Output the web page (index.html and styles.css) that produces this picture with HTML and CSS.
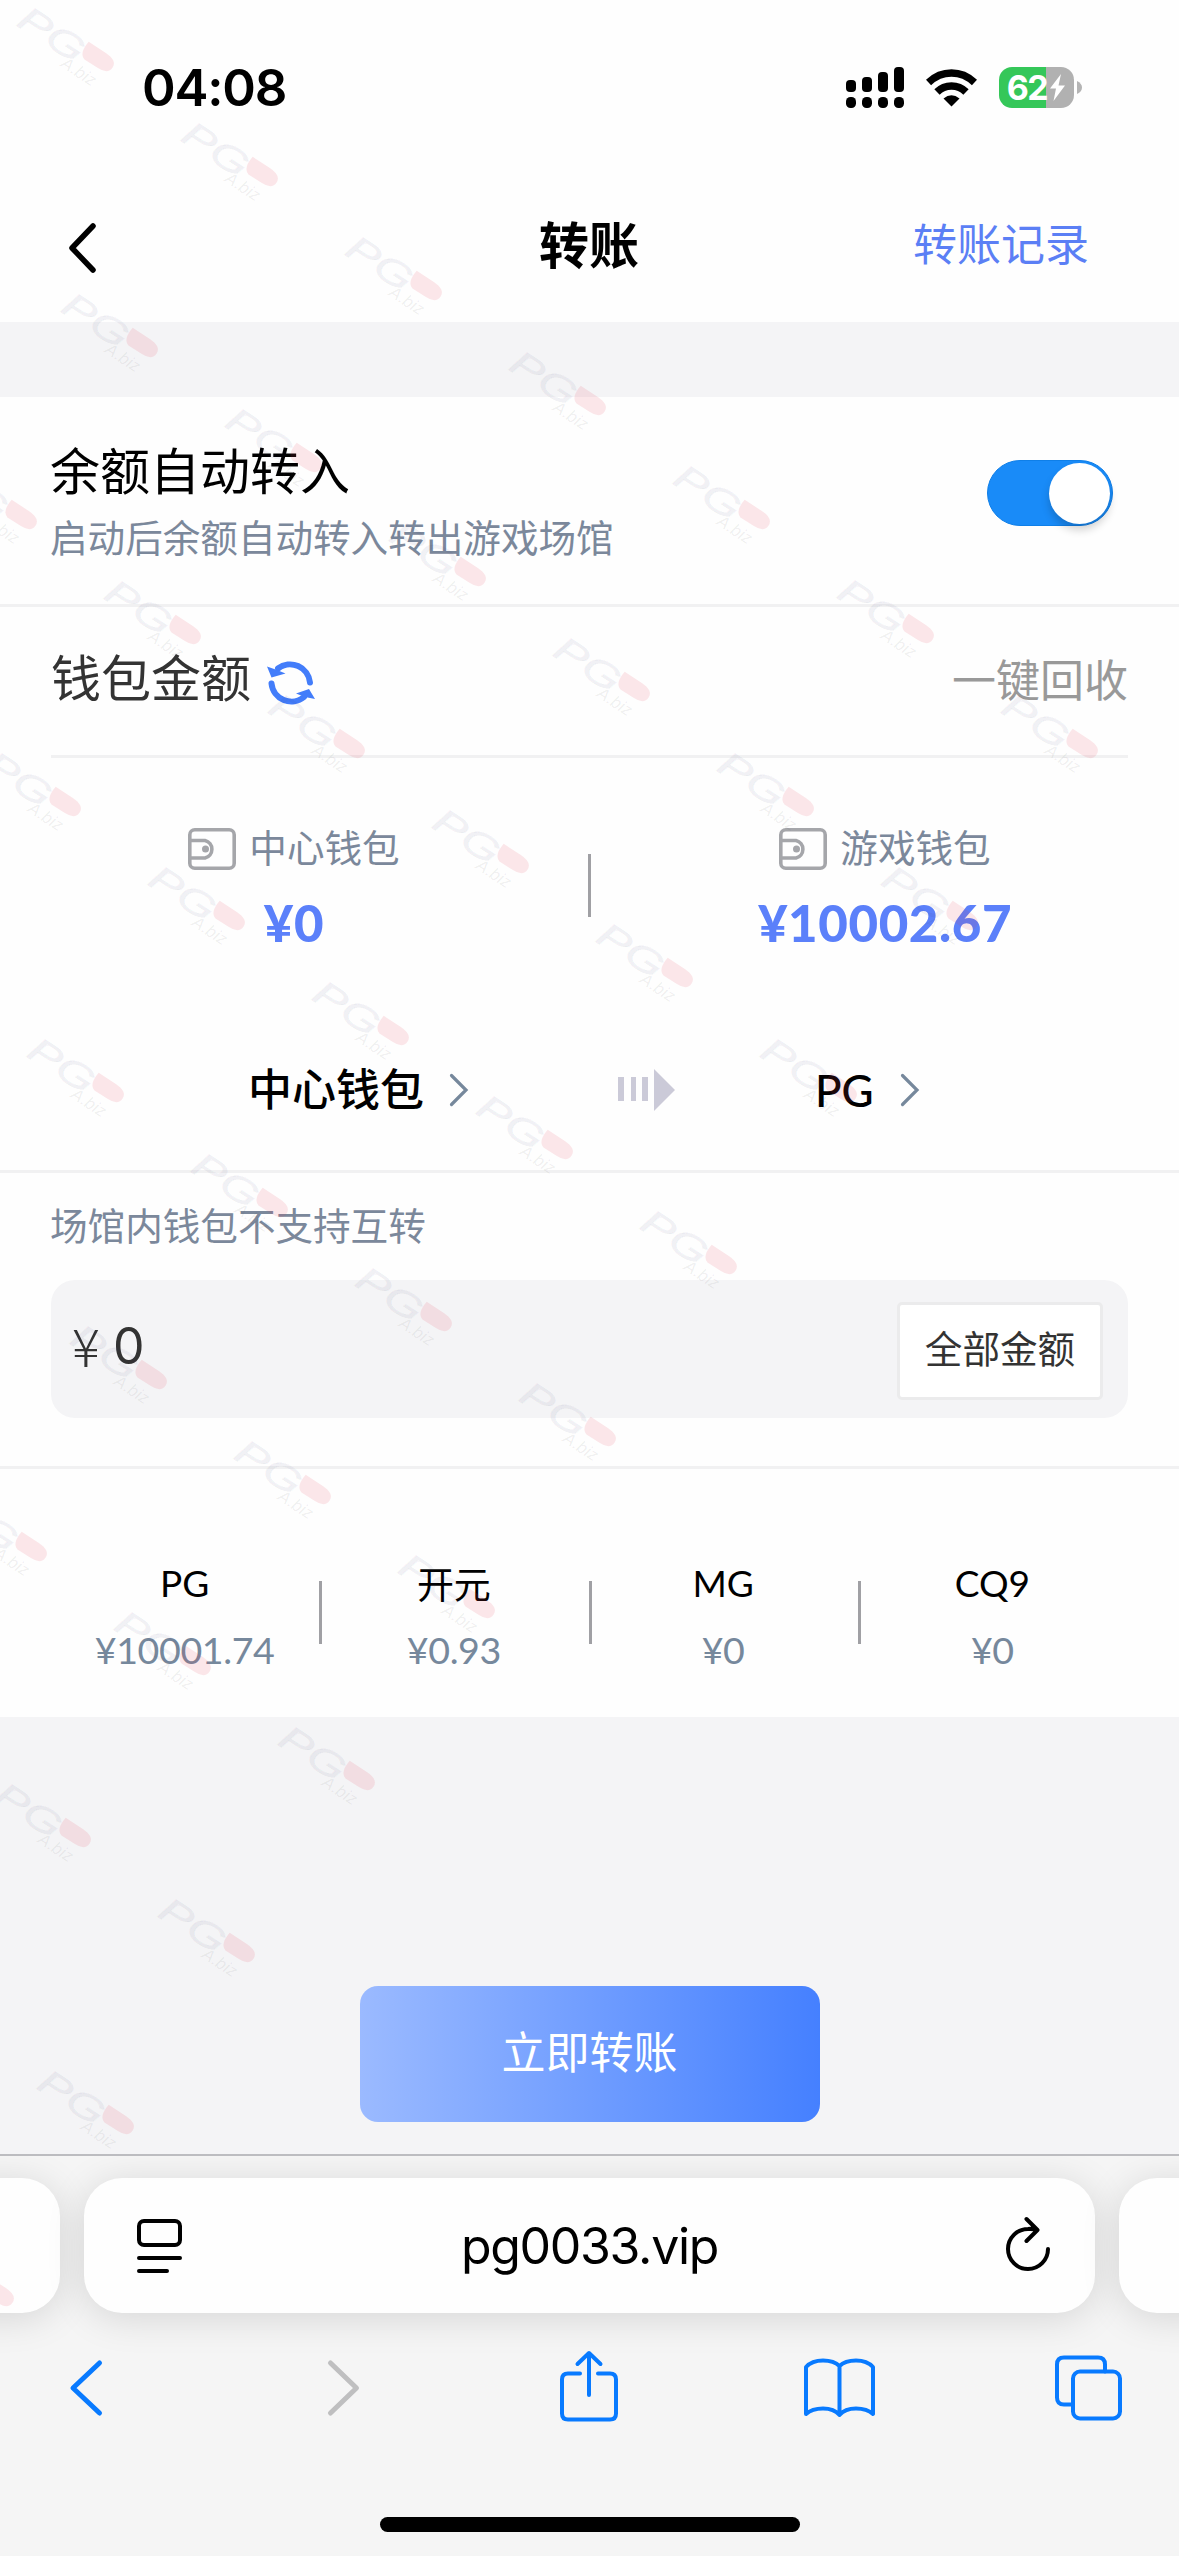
FILE: index.html
```html
<!DOCTYPE html>
<html lang="zh-CN">
<head>
<meta charset="utf-8">
<title>转账</title>
<link rel="stylesheet" href="styles.css">
</head>
<body>
<div class="screen">
  <header class="top">
    <div class="status">
      <span class="clock">04:08</span>
      <div class="status-icons">
        <svg class="signal" width="58" height="41" viewBox="0 0 58 41">
          <rect x="0" y="13" width="10" height="12" rx="4"/><rect x="16" y="10" width="10" height="15" rx="4"/><rect x="32" y="5" width="10" height="20" rx="4"/><rect x="48" y="0" width="10" height="25" rx="4"/>
          <rect x="0" y="30" width="10" height="11" rx="4.5"/><rect x="16" y="30" width="10" height="11" rx="4.5"/><rect x="32" y="30" width="10" height="11" rx="4.5"/><rect x="48" y="30" width="10" height="11" rx="4.5"/>
        </svg>
        <svg class="wifi" width="51" height="38" viewBox="0 0 51 38">
          <g fill="none" stroke="#000" stroke-width="7.5"><path d="M2.5 13.5Q12.500 4 25.500 4T48.500 13.500"/><path d="M11 23Q17 17 25.500 17T40 23"/></g>
          <path d="M17.500 29.500Q25.500 23 33.500 29.500L25.500 37.500Z"/>
        </svg>
        <div class="battery">
          <div class="battery-body"><span class="battery-num">62</span>
            <svg width="17" height="27" viewBox="0 0 17 27"><path d="M12 0 1 14.500h6L4.500 27 16 11.500H9.500Z" fill="#fff"/></svg>
          </div>
          <svg width="5" height="13" viewBox="0 0 5 13"><path d="M0 0q5 2.500 5 6.500T0 13Z" fill="#b4b4b4"/></svg>
        </div>
      </div>
    </div>
    <nav class="titlebar">
      <svg class="back" width="30" height="54" viewBox="0 0 30 54"><path d="M26 5 5 27l21 22" fill="none" stroke="#000" stroke-width="5.500" stroke-linecap="round" stroke-linejoin="round"/></svg>
      <h1 class="title">转账</h1>
      <a class="records">转账记录</a>
    </nav>
  </header>

  <main class="page">
    <section class="auto">
      <div class="auto-text">
        <div class="auto-title">余额自动转入</div>
        <div class="hint">启动后余额自动转入转出游戏场馆</div>
      </div>
      <div class="toggle"><div class="knob"></div></div>
    </section>

    <section class="wallet">
      <div class="wallet-head">
        <span class="wallet-title">钱包金额</span>
        <svg class="refresh" width="48" height="48" viewBox="0 0 48 48">
          <g fill="none" stroke="#437dfa" stroke-width="6" stroke-linecap="round"><path d="M11 9.500A20 20 0 0 1 43 23.500"/><path d="M4.500 24.500A20 20 0 0 0 37 38"/></g>
          <path d="M0 7.500 4.500 18.500 18.500 14.500 10 11 Z M48 40 42 30 29 34.500 38 38Z" fill="#437dfa"/>
        </svg>
        <span class="recall">一键回收</span>
      </div>
      <div class="balances">
        <div class="balance">
          <div class="balance-name">
            <svg width="48" height="42" viewBox="0 0 48 42"><g fill="none" stroke="#a5a6aa" stroke-width="3.600"><rect x="1.800" y="1.800" width="44.400" height="38.400" rx="5"/><path d="M2 12.500H17a9 9 0 0 1 0 17.500H2"/></g><circle cx="17.500" cy="21" r="3.500" fill="#a5a6aa"/></svg>
            <span>中心钱包</span>
          </div>
          <div class="balance-sum">¥0</div>
        </div>
        <i class="rule"></i>
        <div class="balance">
          <div class="balance-name">
            <svg width="48" height="42" viewBox="0 0 48 42"><g fill="none" stroke="#a5a6aa" stroke-width="3.600"><rect x="1.800" y="1.800" width="44.400" height="38.400" rx="5"/><path d="M2 12.500H17a9 9 0 0 1 0 17.500H2"/></g><circle cx="17.500" cy="21" r="3.500" fill="#a5a6aa"/></svg>
            <span>游戏钱包</span>
          </div>
          <div class="balance-sum">¥10002.67</div>
        </div>
      </div>
      <div class="route">
        <div class="route-end from"><span>中心钱包</span><svg width="20" height="34" viewBox="0 0 20 34"><path d="M2.500 2.500 17 17 2.500 31.500" fill="none" stroke="#76889c" stroke-width="3.200" stroke-linecap="round"/></svg></div>
        <svg class="arrow" width="57" height="42" viewBox="0 0 57 42" fill="#cbcad8"><path d="M0 8h6v24H0ZM13 8h5v24h-5ZM24 8h6v24h-6ZM36 0 57 21 36 42Z"/></svg>
        <div class="route-end to"><span class="latin">PG</span><svg width="20" height="34" viewBox="0 0 20 34"><path d="M2.500 2.500 17 17 2.500 31.500" fill="none" stroke="#76889c" stroke-width="3.200" stroke-linecap="round"/></svg></div>
      </div>
    </section>

    <section class="amount">
      <div class="hint">场馆内钱包不支持互转</div>
      <div class="field">
        <span class="yen">¥</span><span class="value">0</span>
        <button class="all">全部金额</button>
      </div>
    </section>

    <section class="venues">
      <div class="venue"><div class="venue-name latin">PG</div><div class="venue-sum">¥10001.74</div></div>
      <div class="venue"><div class="venue-name">开元</div><div class="venue-sum">¥0.93</div></div>
      <div class="venue"><div class="venue-name latin">MG</div><div class="venue-sum">¥0</div></div>
      <div class="venue"><div class="venue-name latin">CQ9</div><div class="venue-sum">¥0</div></div>
    </section>

    <div class="action"><button class="submit">立即转账</button></div>
  </main>

  <footer class="browser">
    <div class="tabs">
      <div class="tab side"></div>
      <div class="tab current">
        <svg width="45" height="54" viewBox="0 0 45 54" fill="none" stroke="#000" stroke-width="4" stroke-linecap="round"><rect x="2" y="2" width="41" height="24" rx="5"/><path d="M2 39h41M2 52h28"/></svg>
        <span class="url">pg0033.vip</span>
        <svg width="46" height="56" viewBox="0 0 46 56" fill="none" stroke="#000" stroke-width="4" stroke-linecap="round" stroke-linejoin="round"><path d="M43 33A20 20 0 1 1 23 13Q28 12.500 32 14M21.500 3 32.500 14 21.500 25"/></svg>
      </div>
      <div class="tab side"></div>
    </div>
    <div class="tools">
      <svg viewBox="50 2350 76 76" width="76" height="76"><path d="M99.500 2363 73 2388l26.500 25" class="ic"/></svg>
      <svg viewBox="300 2350 76 76" width="76" height="76"><path d="m330.500 2363 26 25-26 25" class="ic off"/></svg>
      <svg viewBox="550 2350 76 76" width="76" height="76"><path d="M580 2373.500h-12q-6 0-6 6v34q0 6 6 6h42q6 0 6-6v-34q0-6-6-6h-12M589 2395v-41M577.500 2364l11.500-11 11.500 11" class="ic thin"/></svg>
      <svg viewBox="800 2350 76 76" width="76" height="76"><path d="M839.500 2415V2366Q834 2360.500 823 2360.500T806 2367V2414Q812 2408.500 823 2408.500T839.500 2415Q845 2408.500 856 2408.500T873 2414V2367Q867 2360.500 856 2360.500T839.500 2366" class="ic thin"/></svg>
      <svg viewBox="1050 2350 76 76" width="76" height="76"><path d="M1072 2404.500h-8q-7 0-7-7v-33q0-7 7-7h34q7 0 7 7v7" class="ic thin"/><rect x="1073" y="2371.500" width="47" height="47" rx="7" class="ic thin"/></svg>
    </div>
    <div class="home"></div>
  </footer>

  <svg class="watermark" width="1179" height="2556" viewBox="0 0 1179 2556" aria-hidden="true">
    <defs>
      <g id="mark">
        <g transform="translate(-1 20) rotate(33)">
          <text class="wm-pg" x="0" y="0" textLength="72" lengthAdjust="spacingAndGlyphs">PG</text>
          <text class="wm-biz" x="60" y="10">A.biz</text>
          <path class="wm-pill" d="M71 -26h20q14 0 14 8.500t-12 8.500h-16q-8-2-6-17Z"/>
        </g>
      </g>
    </defs>
    <use href="#mark" x="16" y="5"/><use href="#mark" x="180" y="120"/><use href="#mark" x="344" y="234"/><use href="#mark" x="508" y="349"/><use href="#mark" x="672" y="463"/><use href="#mark" x="836" y="577"/><use href="#mark" x="1000" y="692"/>
    <use href="#mark" x="60" y="291"/><use href="#mark" x="224" y="406"/><use href="#mark" x="388" y="520"/><use href="#mark" x="552" y="635"/><use href="#mark" x="716" y="750"/><use href="#mark" x="880" y="864"/>
    <use href="#mark" x="-61" y="463"/><use href="#mark" x="103" y="578"/><use href="#mark" x="267" y="692"/><use href="#mark" x="431" y="807"/><use href="#mark" x="595" y="921"/><use href="#mark" x="759" y="1036"/>
    <use href="#mark" x="-17" y="750"/><use href="#mark" x="147" y="864"/><use href="#mark" x="311" y="979"/><use href="#mark" x="475" y="1093"/><use href="#mark" x="639" y="1208"/>
    <use href="#mark" x="26" y="1036"/><use href="#mark" x="190" y="1151"/><use href="#mark" x="354" y="1265"/><use href="#mark" x="518" y="1380"/>
    <use href="#mark" x="69" y="1323"/><use href="#mark" x="233" y="1438"/><use href="#mark" x="397" y="1552"/>
    <use href="#mark" x="-51" y="1495"/><use href="#mark" x="113" y="1609"/><use href="#mark" x="277" y="1724"/>
    <use href="#mark" x="-7" y="1781"/><use href="#mark" x="157" y="1896"/><use href="#mark" x="36" y="2068"/><use href="#mark" x="-84" y="2240"/>
  </svg>
</div>
</body>
</html>
```
FILE: styles.css
```css
* { box-sizing: border-box; }
body { margin: 0; font-family: "Noto Sans CJK SC", sans-serif; background: #f4f4f6; color: #000; }
svg { display: block; flex: none; }
button { font: inherit; border: 0; padding: 0; margin: 0; }
.screen { position: relative; width: 1179px; height: 2556px; overflow: hidden; display: flex; flex-direction: column; }
.latin { font-family: Lato, sans-serif; }

/* status bar and title */
.top { height: 322px; background: #fefefe; flex: none; }
.status { height: 175px; padding: 0 97px 0 142px; display: flex; align-items: center; justify-content: space-between; }
.clock { font: 600 51px/60px Inter, sans-serif; letter-spacing: -1.2px; }
.status-icons { display: flex; align-items: center; }
.wifi { margin: 0 22px; }
.battery { display: flex; align-items: center; gap: 3px; }
.battery-body { width: 75px; height: 41px; border-radius: 13px; background: linear-gradient(90deg, #35c759 47px, #b1b1b1 47px); display: flex; align-items: center; justify-content: center; gap: 2px; }
.battery-num { font: 700 34px/41px Inter, sans-serif; color: #fff; letter-spacing: -1.500px; }
.titlebar { height: 147px; padding: 0 90px 0 67px; display: grid; grid-template-columns: 1fr auto 1fr; align-items: start; }
.back { margin-top: 46px; }
.title { margin: 31px 0 0 22px; font-size: 50px; line-height: 72px; font-weight: 700; }
.records { margin-top: 34px; justify-self: end; font-size: 44px; line-height: 66px; color: #5b7ff5; }

/* page */
.page { flex: 1; padding-top: 75px; }
.auto { height: 210px; background: #fefefe; border-bottom: 3px solid #f1f1f2; padding: 36px 66px 0 50px; display: flex; justify-content: space-between; }
.auto-title { font-size: 50px; line-height: 70px; }
.hint { font-size: 37.600px; line-height: 56px; color: #7b889b; }
.auto-text .hint { margin-top: 5px; }
.toggle { width: 126px; height: 66px; margin-top: 27px; border-radius: 33px; padding: 2px; background: #198bf8; border: 1px solid #0f7fe8; display: flex; justify-content: flex-end; }
.knob { width: 61px; height: 61px; border-radius: 50%; background: #fff; box-shadow: 0 6px 8px rgba(0,0,0,.18); }
.wallet { height: 566px; background: #fefefe; border-bottom: 3px solid #f1f1f2; }
.wallet-head { height: 151px; margin: 0 51px; border-bottom: 3px solid #f1f1f2; display: flex; align-items: flex-start; }
.wallet-title { margin-top: 32px; font-size: 50px; line-height: 72px; color: #333; }
.refresh { margin: 52px auto 0 16px; }
.recall { margin-top: 38px; font-size: 44px; line-height: 66px; color: #999; }
.balances { height: 257px; display: flex; }
.balance { flex: 1; display: flex; flex-direction: column; align-items: center; padding-top: 63px; }
.balance-name { display: flex; align-items: center; gap: 13px; font-size: 37.600px; line-height: 56px; color: #7b889b; }
.balance-name span { margin-top: -3px; margin-bottom: 3px; }
.balance-sum { margin-top: 15px; font: 900 51px/62px Lato, sans-serif; letter-spacing: .6px; color: #5b80fa; }
.rule { width: 3px; height: 63px; margin-top: 96px; background: #a0a0a4; flex: none; }
.route { height: 150px; padding: 42px 259px 0 248px; display: flex; align-items: flex-start; font-size: 44px; line-height: 66px; font-weight: 500; }
.route-end { display: flex; align-items: center; }
.route-end span { margin-top: -3px; margin-bottom: 3px; }
.from { width: 370px; gap: 25px; }
.arrow { margin-top: 12px; }
.to { margin-left: 140px; gap: 26px; }
.to .latin { margin: 0; }
.amount { height: 296px; background: #fefefe; border-bottom: 3px solid #f1f1f2; padding: 23px 51px 0 50px; }
.field { height: 138px; margin: 28px 0 0 1px; border-radius: 24px; background: #f4f4f6; padding: 0 25px 0 21px; display: flex; align-items: center; color: #333; }
.yen { width: 41px; font-size: 52px; line-height: 72px; font-weight: 300; margin-top: -9px; }
.value { font: 400 50px/60px Inter, sans-serif; margin-top: -7px; }
.all { width: 206px; height: 98px; margin: 3px 0 0 auto; border: 3px solid #ebebec; border-radius: 5px; background: #fff; font-size: 37.600px; line-height: 56px; padding-bottom: 8px; color: #333; }
.venues { height: 248px; background: #fefefe; padding: 0 52px 0 50px; display: grid; grid-template-columns: repeat(4, 1fr); }
.venue { position: relative; text-align: center; padding-top: 86px; }
.venue + .venue::before { content: ""; position: absolute; left: 0; top: 112px; width: 3px; height: 63px; background: #a0a0a4; }
.venue-name { font-size: 37px; line-height: 56px; }
.venue-sum { margin-top: 11px; font: 400 37.600px/56px Lato, sans-serif; letter-spacing: -.4px; color: #76889c; }
.action { display: flex; justify-content: center; padding-top: 269px; }
.submit { width: 460px; height: 136px; border-radius: 18px; background: linear-gradient(90deg, #9bbaff, #4580ff); color: #fff; font-size: 44px; line-height: 66px; padding-bottom: 9px; }

/* browser chrome */
.browser { height: 402px; flex: none; border-top: 2px solid #bcbcc0; background: #f5f5f5; overflow: hidden; display: flex; flex-direction: column; align-items: center; }
.tabs { display: flex; gap: 24px; margin-top: 22px; width: 1299px; flex: none; }
.tab { height: 135px; border-radius: 38px; background: #fefefe; box-shadow: 0 5px 38px rgba(0,0,0,.13); }
.side { flex: 1; }
.current { width: 1011px; padding: 0 44px 0 53px; display: flex; align-items: center; justify-content: space-between; }
.current svg:last-child { margin-top: -4px; }
.url { font: 400 50px/60px Inter, sans-serif; letter-spacing: -1.300px; position: relative; left: -4px; }
.tools { width: 100%; margin-top: 37px; padding: 0 53px 0 50px; display: flex; justify-content: space-between; }
.ic { fill: none; stroke: #087aff; stroke-width: 5; stroke-linecap: round; stroke-linejoin: round; }
.thin { stroke-width: 4; }
.off { stroke: #bfbfc0; }
.home { width: 420px; height: 15px; margin-top: 91px; border-radius: 8px; background: #000; }

/* repeated brand mark over the whole screen */
.watermark { position: absolute; left: 0; top: 0; pointer-events: none; }
.wm-pg { font: italic 400 36px "Liberation Sans", sans-serif; fill: rgba(60,60,110,.06); stroke: rgba(60,60,110,.03); stroke-width: 1.500; }
.wm-biz { font: italic 17px "Liberation Sans", sans-serif; fill: rgba(60,60,60,.08); }
.wm-pill { fill: rgba(230,60,80,.12); }
```
